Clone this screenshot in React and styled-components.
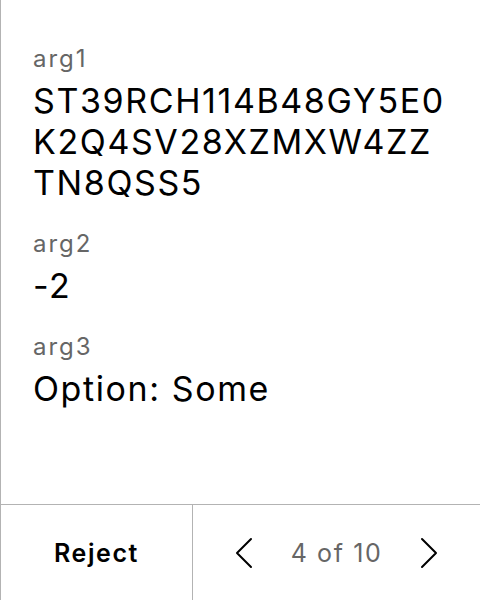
import React from 'react';
import styled, { createGlobalStyle } from 'styled-components';

const GlobalStyle = createGlobalStyle`
  html, body {
    margin: 0;
    padding: 0;
    background: #fff;
  }
  body {
    font-family: Inter, "Noto Sans", sans-serif;
  }
`;

const Screen = styled.div`
  width: 480px;
  height: 600px;
  box-sizing: border-box;
  border-left: 1px solid #b3b3b3;
  display: flex;
  flex-direction: column;
`;

const Body = styled.div`
  flex: 1;
  padding: 44px 32px 0;
  display: flex;
  flex-direction: column;
  gap: 26px;
`;

const Field = styled.div`
  display: flex;
  flex-direction: column;
  gap: 6px;
`;

const Label = styled.div`
  font-size: 24px;
  line-height: 30px;
  letter-spacing: 2px;
  color: #666;
`;

const Value = styled.div`
  font-size: 34px;
  line-height: 41px;
  letter-spacing: 1.6px;
  color: #000;
  word-break: break-all;
`;

const Footer = styled.div`
  height: 95px;
  border-top: 1px solid #b3b3b3;
  display: grid;
  grid-template-columns: 192px 1fr;
`;

const RejectButton = styled.button`
  border: none;
  border-right: 1px solid #b3b3b3;
  background: none;
  font-family: inherit;
  font-size: 25px;
  font-weight: 600;
  letter-spacing: 1.6px;
  color: #000;
  cursor: pointer;
`;

const Pager = styled.div`
  display: flex;
  align-items: center;
  justify-content: center;
  gap: 38px;
`;

const PageText = styled.span`
  font-size: 25px;
  letter-spacing: 1.6px;
  color: #666;
`;

const Arrow = styled.button`
  border: none;
  background: none;
  padding: 0;
  display: flex;
  cursor: pointer;
`;

const Chevron = ({ dir }) => (
  <svg width="18" height="32" viewBox="0 0 18 32" fill="none">
    <polyline
      points={dir === 'left' ? '16,2 2,16 16,30' : '2,2 16,16 2,30'}
      stroke="#000"
      strokeWidth="2"
      strokeLinecap="round"
      strokeLinejoin="round"
    />
  </svg>
);

const args = [
  { label: 'arg1', value: 'ST39RCH114B48GY5E0K2Q4SV28XZMXW4ZZTN8QSS5' },
  { label: 'arg2', value: '-2' },
  { label: 'arg3', value: 'Option: Some' },
];

const App = () => (
  <>
    <GlobalStyle />
    <Screen>
      <Body>
        {args.map((a) => (
          <Field key={a.label}>
            <Label>{a.label}</Label>
            <Value>{a.value}</Value>
          </Field>
        ))}
      </Body>
      <Footer>
        <RejectButton>Reject</RejectButton>
        <Pager>
          <Arrow><Chevron dir="left" /></Arrow>
          <PageText>4 of 10</PageText>
          <Arrow><Chevron dir="right" /></Arrow>
        </Pager>
      </Footer>
    </Screen>
  </>
);

export default App;
